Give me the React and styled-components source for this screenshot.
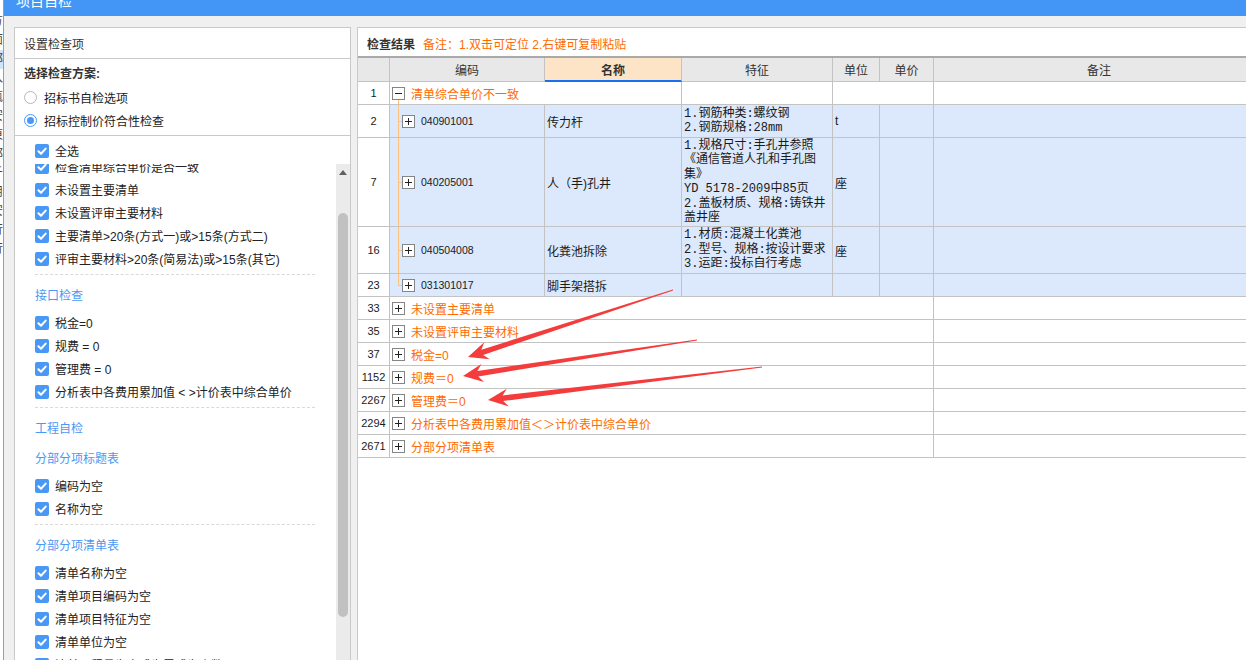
import styled, { createGlobalStyle } from 'styled-components';

const ORANGE = '#ff6a00';
const BLUE = '#4a98f5';
const GRID = '#c3c3c3';
const TREE = '#ffc27a';
const PANEL_BORDER = '#c9c9c9';

const GlobalStyle = createGlobalStyle`
  *, *::before, *::after { box-sizing: border-box; }
  html, body { margin: 0; padding: 0; }
  body {
    width: 1246px;
    height: 660px;
    overflow: hidden;
    background: #fff;
    font-family: "Liberation Sans", "Noto Sans CJK SC", sans-serif;
    font-size: 12px;
    color: #222;
  }
`;

const backChars = ['方', '面', '邵', '入', '瓶', '安', '東', '邵', '斤', '用', '安', '行', '行'];

const leftMain = [
  '检查清单综合单价是否一致',
  '未设置主要清单',
  '未设置评审主要材料',
  '主要清单>20条(方式一)或>15条(方式二)',
  '评审主要材料>20条(简易法)或>15条(其它)',
];
const leftPort = ['税金=0', '规费 = 0', '管理费 = 0', '分析表中各费用累加值 < >计价表中综合单价'];
const leftTitle = ['编码为空', '名称为空'];
const leftBill = ['清单名称为空', '清单项目编码为空', '清单项目特征为空', '清单单位为空', '清单工程量为空或为零或为小数'];

const dataRows = [
  { no: 2, code: '040901001', name: '传力杆', feat: ['1.钢筋种类:螺纹钢', '2.钢筋规格:28mm'], unit: 't', h: 33 },
  {
    no: 7,
    code: '040205001',
    name: '人（手)孔井',
    feat: ['1.规格尺寸:手孔井参照', '《通信管道人孔和手孔图', '集》', 'YD 5178-2009中85页', '2.盖板材质、规格:铸铁井', '盖井座'],
    unit: '座',
    h: 89,
  },
  { no: 16, code: '040504008', name: '化粪池拆除', feat: ['1.材质:混凝土化粪池', '2.型号、规格:按设计要求', '3.运距:投标自行考虑'], unit: '座', h: 47 },
  { no: 23, code: '031301017', name: '脚手架搭拆', feat: [], unit: '', h: 23, last: true },
];

const groups = [
  [33, '未设置主要清单'],
  [35, '未设置评审主要材料'],
  [37, '税金=0'],
  [1152, '规费＝0'],
  [2267, '管理费＝0'],
  [2294, '分析表中各费用累加值＜＞计价表中综合单价'],
  [2671, '分部分项清单表'],
];

// tapered red annotation arrow, tail -> tip
const arrowPoints = (tx, ty, px, py) => {
  const dx = px - tx;
  const dy = py - ty;
  const len = Math.hypot(dx, dy);
  const ux = dx / len;
  const uy = dy / len;
  const nx = -uy;
  const ny = ux;
  const pt = (d, w) => `${(px - ux * d + nx * w).toFixed(1)},${(py - uy * d + ny * w).toFixed(1)}`;
  return [pt(len, 0.4), pt(15, 2.8), pt(20, 9), pt(0, 0), pt(20, -9), pt(15, -2.8), pt(len, -0.4)].join(' ');
};

const arrows = [
  [673, 290, 468, 357],
  [697, 340, 463, 376],
  [762, 367, 488, 400],
];

const CheckBox = () => (
  <CheckSvg width="14" height="14" viewBox="0 0 14 14">
    <rect x="0" y="0" width="14" height="14" rx="2" fill={BLUE} />
    <path d="M3.4 7.2 L6 9.7 L10.7 4.6" fill="none" stroke="#fff" strokeWidth="2" strokeLinecap="round" strokeLinejoin="round" />
  </CheckSvg>
);

const TreeBox = ({ open }) => (
  <BoxSvg width="13" height="13" viewBox="0 0 13 13">
    <rect x="0.5" y="0.5" width="12" height="12" fill="#fff" stroke="#858585" />
    <line x1="3" y1="6.5" x2="10" y2="6.5" stroke="#222" />
    {!open && <line x1="6.5" y1="3" x2="6.5" y2="10" stroke="#222" />}
  </BoxSvg>
);

const CheckItem = ({ text }) => (
  <CheckRow>
    <CheckBox />
    <span>{text}</span>
  </CheckRow>
);

const App = () => {
  return (
    <>
      <GlobalStyle />
      <Page>
        <BackStrip>
          {backChars.map((c, i) => (
            <BackLine key={i} $sel={i === 2}>
              {c}
            </BackLine>
          ))}
        </BackStrip>
        <Dialog>
          <TitleBar>
            <Title>项目自检</Title>
          </TitleBar>
          <Body>
            <LeftPanel>
              <PanelHead>设置检查项</PanelHead>
              <Scheme>
                <SchemeTitle>选择检查方案:</SchemeTitle>
                <RadioRow>
                  <Radio />
                  招标书自检选项
                </RadioRow>
                <RadioRow>
                  <Radio $checked />
                  招标控制价符合性检查
                </RadioRow>
              </Scheme>
              <SelectAll>
                <CheckItem text="全选" />
              </SelectAll>
              <ScrollArea>
                <List>
                  <ListInner>
                    {leftMain.map((t) => (
                      <CheckItem key={t} text={t} />
                    ))}
                    <Divider />
                    <SectionTitle>接口检查</SectionTitle>
                    {leftPort.map((t) => (
                      <CheckItem key={t} text={t} />
                    ))}
                    <Divider />
                    <SectionTitle>工程自检</SectionTitle>
                    <SectionTitle>分部分项标题表</SectionTitle>
                    {leftTitle.map((t) => (
                      <CheckItem key={t} text={t} />
                    ))}
                    <Divider />
                    <SectionTitle>分部分项清单表</SectionTitle>
                    {leftBill.map((t) => (
                      <CheckItem key={t} text={t} />
                    ))}
                  </ListInner>
                </List>
                <ScrollBar>
                  <ScrollArrow />
                  <ScrollThumb />
                </ScrollBar>
              </ScrollArea>
            </LeftPanel>

            <RightPanel>
              <ResultHead>
                <ResultTitle>检查结果</ResultTitle>
                <ResultNote>备注：1.双击可定位 2.右键可复制粘贴</ResultNote>
              </ResultHead>
              <Table>
                <Row $h={24}>
                  <HeadCell />
                  <HeadCell>编码</HeadCell>
                  <HeadCell $active>名称</HeadCell>
                  <HeadCell>特征</HeadCell>
                  <HeadCell>单位</HeadCell>
                  <HeadCell>单价</HeadCell>
                  <HeadCell>备注</HeadCell>
                </Row>

                <Row $h={23}>
                  <NumCell>1</NumCell>
                  <TreeCell $span="2 / 4">
                    <BoxColumn>
                      <Spacer />
                      <TreeBox open />
                      <DownLine />
                    </BoxColumn>
                    <GroupLabel>清单综合单价不一致</GroupLabel>
                  </TreeCell>
                  <Cell />
                  <Cell $span="5 / 7" />
                  <Cell />
                </Row>

                {dataRows.map((r) => (
                  <Row key={r.no} $h={r.h}>
                    <NumCell>{r.no}</NumCell>
                    <TreeCell $bg="#dce8fb">
                      <Gutter>
                        <GutterTop />
                        <GutterBottom $last={r.last} />
                      </Gutter>
                      <TreeBox />
                      <Code>{r.code}</Code>
                    </TreeCell>
                    <Cell $bg="#dce8fb">{r.name}</Cell>
                    <FeatCell>
                      {r.feat.map((line) => (
                        <div key={line}>{line}</div>
                      ))}
                    </FeatCell>
                    <Cell $bg="#dce8fb">{r.unit}</Cell>
                    <Cell $bg="#dce8fb" />
                    <Cell $bg="#dce8fb" />
                  </Row>
                ))}

                {groups.map(([no, label]) => (
                  <Row key={no} $h={23}>
                    <NumCell>{no}</NumCell>
                    <TreeCell $span="2 / 7">
                      <GroupBox>
                        <TreeBox />
                      </GroupBox>
                      <GroupLabel>{label}</GroupLabel>
                    </TreeCell>
                    <Cell />
                  </Row>
                ))}
              </Table>
            </RightPanel>
          </Body>
        </Dialog>

        <Marks width="1246" height="660" viewBox="0 0 1246 660">
          {arrows.map((a, i) => (
            <polygon key={i} points={arrowPoints(...a)} fill="#f43c3c" />
          ))}
        </Marks>
      </Page>
    </>
  );
};

const Page = styled.div`
  position: relative;
  display: flex;
  width: 1246px;
  height: 660px;
  overflow: hidden;
`;

const BackStrip = styled.div`
  flex: none;
  width: 4px;
  padding-top: 12px;
  overflow: hidden;
  border-right: 1px solid #9d9d9d;
  background: #fff;
`;

const BackLine = styled.div`
  height: 19px;
  line-height: 19px;
  margin-left: -9px;
  white-space: nowrap;
  color: #444;
  background: ${(p) => (p.$sel ? '#cfe4fb' : 'transparent')};
`;

const Dialog = styled.div`
  flex: none;
  width: 1262px;
  display: flex;
  flex-direction: column;
  background: #f0f0f0;
`;

const TitleBar = styled.div`
  flex: none;
  height: 16px;
  padding-left: 12px;
  overflow: hidden;
  background: #4396f6;
`;

const Title = styled.div`
  margin-top: -7px;
  line-height: 16px;
  font-size: 14px;
  color: #fff;
`;

const Body = styled.div`
  flex: 1;
  display: flex;
  align-items: flex-start;
  gap: 6px;
  padding: 11px 0 0 10px;
`;

const LeftPanel = styled.div`
  flex: none;
  width: 337px;
  height: 680px;
  display: flex;
  flex-direction: column;
  border: 1px solid ${PANEL_BORDER};
  background: #fff;
`;

const PanelHead = styled.div`
  flex: none;
  height: 31px;
  display: flex;
  align-items: center;
  padding-left: 9px;
  color: #333;
  border-bottom: 1px solid ${PANEL_BORDER};
`;

const Scheme = styled.div`
  flex: none;
  padding: 4px 9px 3px;
  border-bottom: 1px solid ${PANEL_BORDER};
`;

const SchemeTitle = styled.div`
  line-height: 23px;
  font-weight: bold;
  color: #333;
`;

const RadioRow = styled.div`
  display: flex;
  align-items: center;
  gap: 7px;
  height: 23px;
  color: #222;
`;

const Radio = styled.span`
  flex: none;
  width: 13px;
  height: 13px;
  border-radius: 50%;
  border: 1px solid ${(p) => (p.$checked ? BLUE : '#b8b8b8')};
  background: #fff;
  display: flex;
  align-items: center;
  justify-content: center;
  &::after {
    content: '';
    width: 7px;
    height: 7px;
    border-radius: 50%;
    background: ${(p) => (p.$checked ? BLUE : 'transparent')};
  }
`;

const SelectAll = styled.div`
  flex: none;
  padding: 3px 0 2px 20px;
`;

const CheckRow = styled.div`
  display: flex;
  align-items: center;
  gap: 6px;
  height: 23px;
  white-space: nowrap;
  color: #222;
`;

const CheckSvg = styled.svg`
  flex: none;
  display: block;
`;

const ScrollArea = styled.div`
  flex: 1;
  min-height: 0;
  display: flex;
`;

const List = styled.div`
  flex: 1;
  overflow: hidden;
  padding-left: 20px;
`;

const ListInner = styled.div`
  margin-top: -9px;
`;

const Divider = styled.div`
  width: 280px;
  border-top: 1px dashed #d9d9d9;
  margin: 4px 0 11px;
`;

const SectionTitle = styled.div`
  line-height: 20px;
  margin: 10px 0 5px;
  color: ${BLUE};
`;

const ScrollBar = styled.div`
  flex: none;
  width: 14px;
  display: flex;
  flex-direction: column;
  align-items: center;
  background: #ebebeb;
`;

const ScrollArrow = styled.div`
  margin-top: 6px;
  width: 0;
  height: 0;
  border-left: 4px solid transparent;
  border-right: 4px solid transparent;
  border-bottom: 5px solid #606060;
`;

const ScrollThumb = styled.div`
  margin-top: 38px;
  width: 10px;
  height: 404px;
  border-radius: 5px;
  background: #c1c1c1;
`;

const RightPanel = styled.div`
  flex: 1;
  height: 680px;
  display: flex;
  flex-direction: column;
  border: 1px solid ${PANEL_BORDER};
  background: #fff;
`;

const ResultHead = styled.div`
  flex: none;
  height: 30px;
  display: flex;
  align-items: center;
  gap: 8px;
  padding: 3px 0 0 9px;
  border-bottom: 2px solid #a9a9a9;
`;

const ResultTitle = styled.span`
  font-weight: bold;
  color: #333;
`;

const ResultNote = styled.span`
  color: ${ORANGE};
`;

const Table = styled.div`
  display: flex;
  flex-direction: column;
`;

const Row = styled.div`
  display: grid;
  grid-template-columns: 32px 155px 137px 151px 47px 54px 1fr;
  height: ${(p) => p.$h}px;
`;

const Cell = styled.div`
  grid-column: ${(p) => p.$span || 'auto'};
  display: flex;
  align-items: center;
  min-width: 0;
  padding: 0 2px;
  overflow: hidden;
  white-space: nowrap;
  color: #1a1a1a;
  border-right: 1px solid ${GRID};
  border-bottom: 1px solid ${GRID};
  background: ${(p) => p.$bg || '#fff'};
`;

const HeadCell = styled(Cell)`
  justify-content: center;
  color: #333;
  font-weight: ${(p) => (p.$active ? 'bold' : 'normal')};
  background: ${(p) => (p.$active ? '#fde4c6' : '#e8e8e8')};
  border-bottom: ${(p) => (p.$active ? '2px solid #1a6ef0' : `1px solid ${GRID}`)};
`;

const NumCell = styled(Cell)`
  justify-content: center;
  font-size: 11px;
`;

const TreeCell = styled(Cell)`
  padding: 0;
`;

const FeatCell = styled.div`
  display: flex;
  flex-direction: column;
  justify-content: center;
  padding: 0 1px 0 2px;
  overflow: hidden;
  white-space: nowrap;
  line-height: 14.5px;
  font-family: "Liberation Mono", "Noto Sans CJK SC", monospace;
  color: #1a1a1a;
  background: #dce8fb;
  border-right: 1px solid ${GRID};
  border-bottom: 1px solid ${GRID};
`;

const BoxSvg = styled.svg`
  flex: none;
  display: block;
`;

const BoxColumn = styled.div`
  flex: none;
  align-self: stretch;
  width: 13px;
  margin-left: 2px;
  display: flex;
  flex-direction: column;
`;

const Spacer = styled.div`
  flex: 1;
`;

const DownLine = styled.div`
  flex: 1;
  margin-left: 6px;
  border-left: 1px solid ${TREE};
`;

const Gutter = styled.div`
  flex: none;
  align-self: stretch;
  width: 4px;
  margin-left: 8px;
  display: flex;
  flex-direction: column;
`;

const GutterTop = styled.div`
  flex: 1;
  border-left: 1px solid ${TREE};
  border-bottom: 1px solid ${TREE};
`;

const GutterBottom = styled.div`
  flex: 1;
  border-left: ${(p) => (p.$last ? 'none' : `1px solid ${TREE}`)};
`;

const Code = styled.span`
  margin-left: 6px;
  font-size: 10.5px;
`;

const GroupBox = styled.div`
  flex: none;
  margin-left: 2px;
`;

const GroupLabel = styled.span`
  margin-left: 6px;
  color: ${ORANGE};
`;

const Marks = styled.svg`
  position: absolute;
  left: 0;
  top: 0;
  pointer-events: none;
`;

export default App;
